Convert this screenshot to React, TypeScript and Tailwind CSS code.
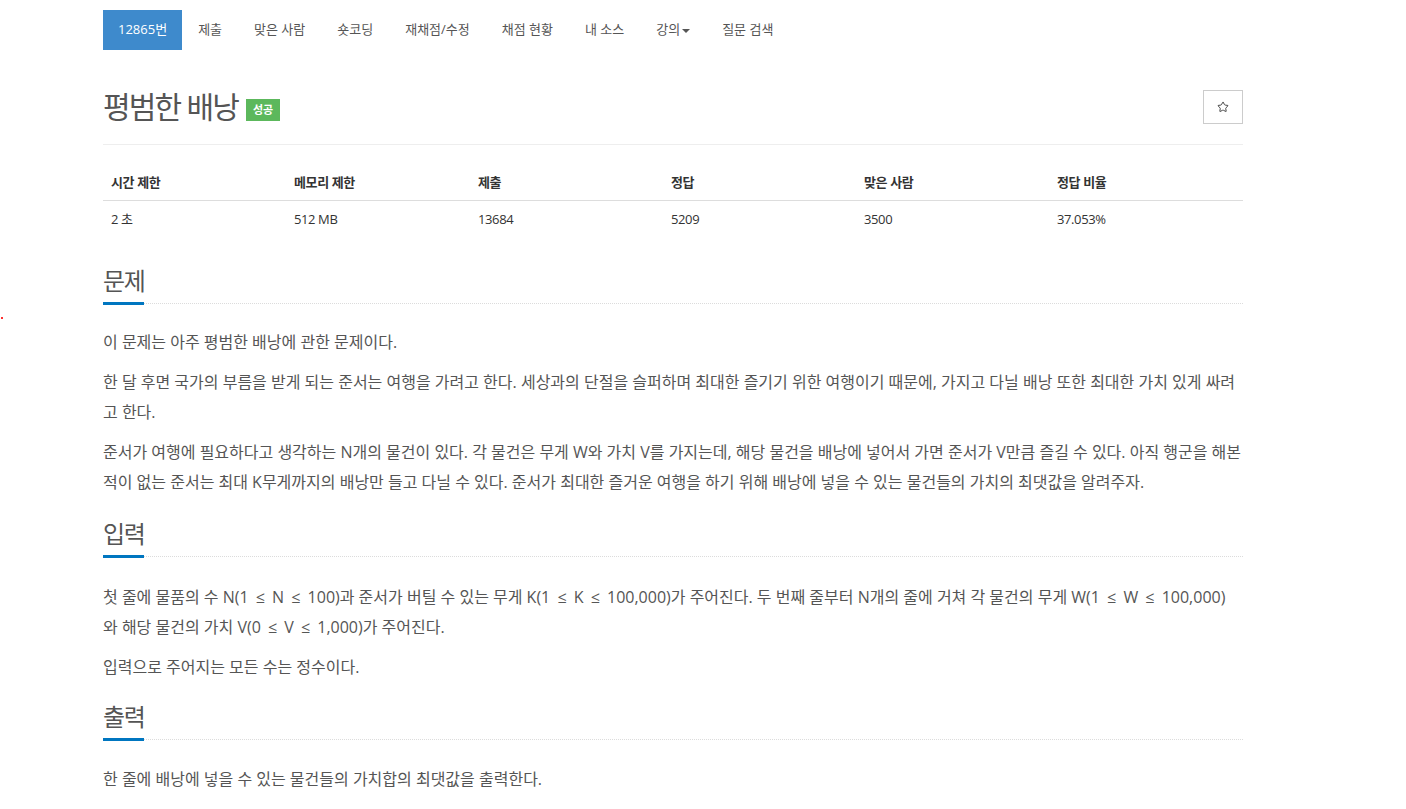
import { Star } from 'lucide-react';

const navItems = ['제출', '맞은 사람', '숏코딩', '재채점/수정', '채점 현황', '내 소스'];

const stats = [
  { label: '시간 제한', value: '2 초', w: 'w-[183px]' },
  { label: '메모리 제한', value: '512 MB', w: 'w-[184px]' },
  { label: '제출', value: '13684', w: 'w-[193px]' },
  { label: '정답', value: '5209', w: 'w-[193px]' },
  { label: '맞은 사람', value: '3500', w: 'w-[193px]' },
  { label: '정답 비율', value: '37.053%', w: 'w-[194px]' },
];

const font = { fontFamily: '"Open Sans", "Noto Sans CJK KR", sans-serif' };

function SectionTitle({ children }: { children: React.ReactNode }) {
  return (
    <div className="flex border-b border-dotted border-[#dcdcdc]">
      <span className="-mb-[2px] border-b-[3px] border-[#0076c0] pb-2 text-[24px] leading-[26px] tracking-[-0.06em] text-[#555]">
        {children}
      </span>
    </div>
  );
}

const Le = () => <span className="mx-[3px]">≤</span>;

export default function App() {
  return (
    <div className="relative min-h-screen bg-white text-[#555]" style={font}>
      <div className="absolute left-[1px] top-[317px] h-[2px] w-[2px] bg-[#ff3030]" />
      <div className="ml-[103px] w-[1140px]">
        {/* nav */}
        <nav className="flex pt-[10px] text-[13px]">
          <div className="flex h-[40px] items-center bg-[#3e8acc] px-[15px] text-white">12865번</div>
          {navItems.map((item) => (
            <div key={item} className="flex h-[40px] items-center px-[16px] text-[#555]">
              {item}
            </div>
          ))}
          <div className="flex h-[40px] items-center px-[16px] text-[#555]">
            강의
            <span className="ml-[2px] mt-[2px] h-0 w-0 border-x-[4px] border-t-[4px] border-x-transparent border-t-[#555]" />
          </div>
          <div className="flex h-[40px] items-center px-[16px] text-[#555]">질문 검색</div>
        </nav>

        {/* title */}
        <div className="mt-[40px] flex h-[34px] items-center justify-between">
          <div className="flex items-center">
            <h1 className="text-[30px] leading-[34px] tracking-[-0.06em] text-[#555]">평범한 배낭</h1>
            <span className="ml-[8px] mt-[6px] flex h-[22px] w-[34px] items-center justify-center bg-[#5cb85c] text-[11px] font-bold text-white">
              성공
            </span>
          </div>
          <button className="flex h-[34px] w-[40px] items-center justify-center border border-[#ccc] bg-white">
            <Star size={12} strokeWidth={1.8} color="#333" />
          </button>
        </div>

        <div className="mt-[20px] border-t border-[#eee]" />

        {/* stats table */}
        <table className="mt-[19px] w-full border-collapse text-[13px] tracking-[-0.03em]">
          <thead>
            <tr className="border-b border-[#ddd]">
              {stats.map((s) => (
                <th key={s.label} className={`${s.w} px-2 py-2 text-left font-bold leading-[20px] text-[#333]`}>
                  {s.label}
                </th>
              ))}
            </tr>
          </thead>
          <tbody>
            <tr>
              {stats.map((s) => (
                <td key={s.label} className="px-2 py-2 leading-[20px] text-[#333]">
                  {s.value}
                </td>
              ))}
            </tr>
          </tbody>
        </table>

        {/* 문제 */}
        <section className="mt-[31px]">
          <SectionTitle>문제</SectionTitle>
          <div className="mt-[23px] text-[16px] leading-[30px] text-[#555]">
            <p className="mb-[10px]">이 문제는 아주 평범한 배낭에 관한 문제이다.</p>
            <p className="mb-[10px]">
              한 달 후면 국가의 부름을 받게 되는 준서는 여행을 가려고 한다. 세상과의 단절을 슬퍼하며 최대한 즐기기 위한 여행이기 때문에, 가지고 다닐 배낭 또한 최대한 가치 있게 싸려고 한다.
            </p>
            <p className="mb-[10px]">
              준서가 여행에 필요하다고 생각하는 N개의 물건이 있다. 각 물건은 무게 W와 가치 V를 가지는데, 해당 물건을 배낭에 넣어서 가면 준서가 V만큼 즐길 수 있다. 아직 행군을 해본 적이 없는 준서는 최대 K무게까지의 배낭만 들고 다닐 수 있다. 준서가 최대한 즐거운 여행을 하기 위해 배낭에 넣을 수 있는 물건들의 가치의 최댓값을 알려주자.
            </p>
          </div>
        </section>

        {/* 입력 */}
        <section className="mt-[24px]">
          <SectionTitle>입력</SectionTitle>
          <div className="mt-[25px] text-[16px] leading-[30px] text-[#555]">
            <p className="mb-[10px]">
              첫 줄에 물품의 수 N(1 <Le /> N <Le /> 100)과 준서가 버틸 수 있는 무게 K(1 <Le /> K <Le /> 100,000)가 주어진다. 두 번째 줄부터 N개의 줄에 거쳐 각 물건의 무게 W(1 <Le /> W <Le /> 100,000)
              <br />
              와 해당 물건의 가치 V(0 <Le /> V <Le /> 1,000)가 주어진다.
            </p>
            <p className="mb-[10px]">입력으로 주어지는 모든 수는 정수이다.</p>
          </div>
        </section>

        {/* 출력 */}
        <section className="mt-[22px]">
          <SectionTitle>출력</SectionTitle>
          <div className="mt-[24px] text-[16px] leading-[30px] text-[#555]">
            <p className="mb-[10px]">한 줄에 배낭에 넣을 수 있는 물건들의 가치합의 최댓값을 출력한다.</p>
          </div>
        </section>
      </div>
    </div>
  );
}
